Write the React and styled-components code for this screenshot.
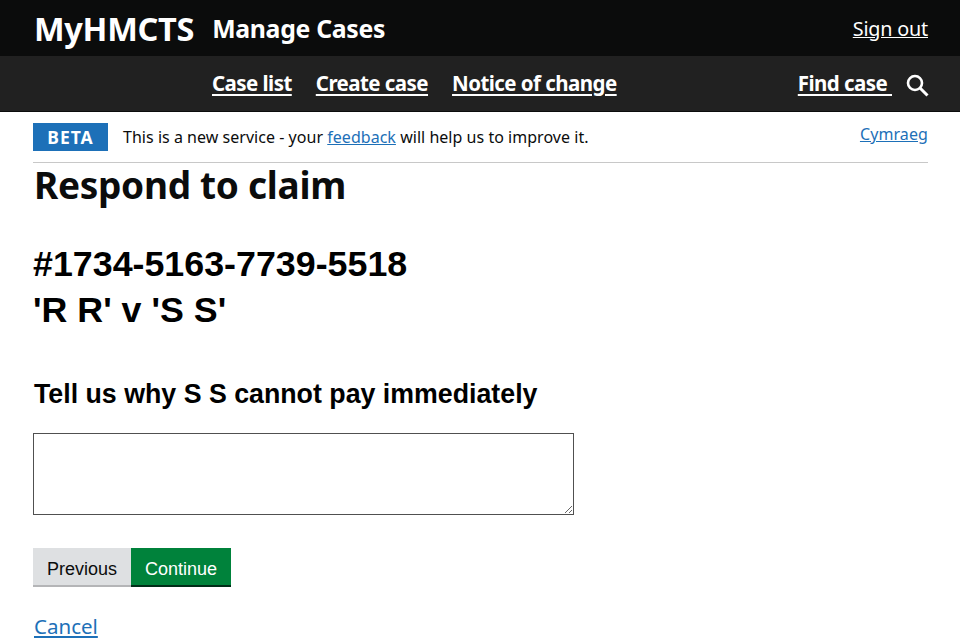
import styled, { createGlobalStyle } from "styled-components";

const Global = createGlobalStyle`
  html, body { margin: 0; padding: 0; background: #fff; }
  body { font-family: "Noto Sans", Arial, sans-serif; color: #0b0c0c; height: 640px; overflow: hidden; }
`;

const TopBar = styled.header`
  height: 56px;
  background: #0b0c0c;
  padding: 0 32px 0 34px;
  display: flex;
  align-items: center;
  justify-content: space-between;
`;
const Brand = styled.div`
  display: flex;
  align-items: center;
  gap: 18px;
  color: #fff;
  font-weight: 700;
`;
const Logo = styled.span`
  font-size: 32.5px;
  letter-spacing: -0.3px;
`;
const ServiceName = styled.span`
  font-size: 24.8px;
  letter-spacing: -0.3px;
`;
const SignOut = styled.a`
  color: #fff;
  font-size: 19.8px;
  text-decoration: underline;
  letter-spacing: -0.2px;
`;
const NavBar = styled.nav`
  box-sizing: border-box;
  height: 56px;
  background: #212121;
  border-bottom: 1px solid #0b0c0c;
  padding: 0 31px 2px 212px;
  display: flex;
  align-items: center;
  justify-content: space-between;
`;
const NavList = styled.div`
  display: flex;
  gap: 24px;
`;
const NavLink = styled.a`
  color: #fff;
  font-size: 20.5px;
  font-weight: 700;
  letter-spacing: -0.55px;
  text-decoration: underline;
  text-underline-offset: 3px;
`;
const FindCase = styled.div`
  display: flex;
  align-items: center;
  gap: 13px;
`;
const SearchIcon = styled.svg`
  margin-top: 4px;
`;
const Wrapper = styled.main`
  padding: 0 32px 0 33px;
`;
const BetaRow = styled.div`
  height: 50px;
  border-bottom: 1px solid #c8c8c8;
  display: flex;
  align-items: flex-start;
  justify-content: space-between;
`;
const BetaLeft = styled.div`
  display: flex;
  align-items: center;
  gap: 15px;
  margin-top: 11px;
`;
const BetaTag = styled.strong`
  width: 75px;
  height: 28px;
  background: #1d70b8;
  color: #fff;
  font-size: 17.5px;
  font-weight: 700;
  letter-spacing: 1px;
  display: flex;
  align-items: center;
  justify-content: center;
`;
const BetaText = styled.span`
  font-size: 16px;
  letter-spacing: 0.03px;
`;
const BlueLink = styled.a`
  color: #1d70b8;
  text-decoration: underline;
`;
const WelshLink = styled(BlueLink)`
  font-size: 16px;
  margin-top: 11px;
  letter-spacing: 0.1px;
`;
const PageTitle = styled.h1`
  margin: 0 0 0 1px;
  font-size: 37px;
  line-height: 44px;
  font-weight: 700;
  letter-spacing: -0.3px;
`;
const CaseHeading = styled.h2`
  margin: 34px 0 0;
  font-family: "Liberation Sans", Arial, sans-serif;
  font-size: 35.8px;
  line-height: 46px;
  font-weight: 700;
  color: #000;
`;
const FieldLabel = styled.label`
  display: block;
  margin: 44px 0 0 1px;
  font-family: "Liberation Sans", Arial, sans-serif;
  font-size: 26.75px;
  line-height: 34px;
  font-weight: 700;
  color: #000;
`;
const AnswerBox = styled.textarea`
  display: block;
  box-sizing: border-box;
  width: 541px;
  height: 82px;
  margin-top: 22px;
  border: 1px solid #505050;
  background: #fff;
  border-radius: 0;
  outline: none;
`;
const ButtonRow = styled.div`
  display: flex;
  margin-top: 33px;
`;
const FormButton = styled.button`
  box-sizing: border-box;
  height: 39px;
  width: ${(p) => (p.$primary ? "100px" : "98px")};
  border: 0;
  border-bottom: 2px solid ${(p) => (p.$primary ? "#002d18" : "#b4b5b7")};
  background: ${(p) => (p.$primary ? "#00823b" : "#dee0e2")};
  color: ${(p) => (p.$primary ? "#fff" : "#0b0c0c")};
  font-family: "Liberation Sans", Arial, sans-serif;
  font-size: 18px;
  padding: 6px 0 0;
`;
const CancelLink = styled(BlueLink)`
  display: inline-block;
  margin: 26px 0 0 1px;
  font-size: 20.5px;
  line-height: 27px;
`;

export default function App() {
  return (
    <>
      <Global />
      <TopBar>
        <Brand>
          <Logo>MyHMCTS</Logo>
          <ServiceName>Manage Cases</ServiceName>
        </Brand>
        <SignOut>Sign out</SignOut>
      </TopBar>
      <NavBar>
        <NavList>
          <NavLink>Case list</NavLink>
          <NavLink>Create case</NavLink>
          <NavLink>Notice of change</NavLink>
        </NavList>
        <FindCase>
          <NavLink>Find case&nbsp;</NavLink>
          <SearchIcon width="24" height="24" viewBox="0 0 24 24" fill="none" stroke="#fff">
            <circle cx="10" cy="10" r="7" strokeWidth="2.6" />
            <path d="M15 15l7.5 7.5" strokeWidth="3" />
          </SearchIcon>
        </FindCase>
      </NavBar>
      <Wrapper>
        <BetaRow>
          <BetaLeft>
            <BetaTag>BETA</BetaTag>
            <BetaText>
              This is a new service - your <BlueLink>feedback</BlueLink> will help us to improve it.
            </BetaText>
          </BetaLeft>
          <WelshLink>Cymraeg</WelshLink>
        </BetaRow>
        <PageTitle>Respond to claim</PageTitle>
        <CaseHeading>
          #1734-5163-7739-5518
          <br />
          'R R' v 'S S'
        </CaseHeading>
        <FieldLabel>Tell us why S S cannot pay immediately</FieldLabel>
        <AnswerBox />
        <ButtonRow>
          <FormButton>Previous</FormButton>
          <FormButton $primary>Continue</FormButton>
        </ButtonRow>
        <CancelLink>Cancel</CancelLink>
      </Wrapper>
    </>
  );
}
